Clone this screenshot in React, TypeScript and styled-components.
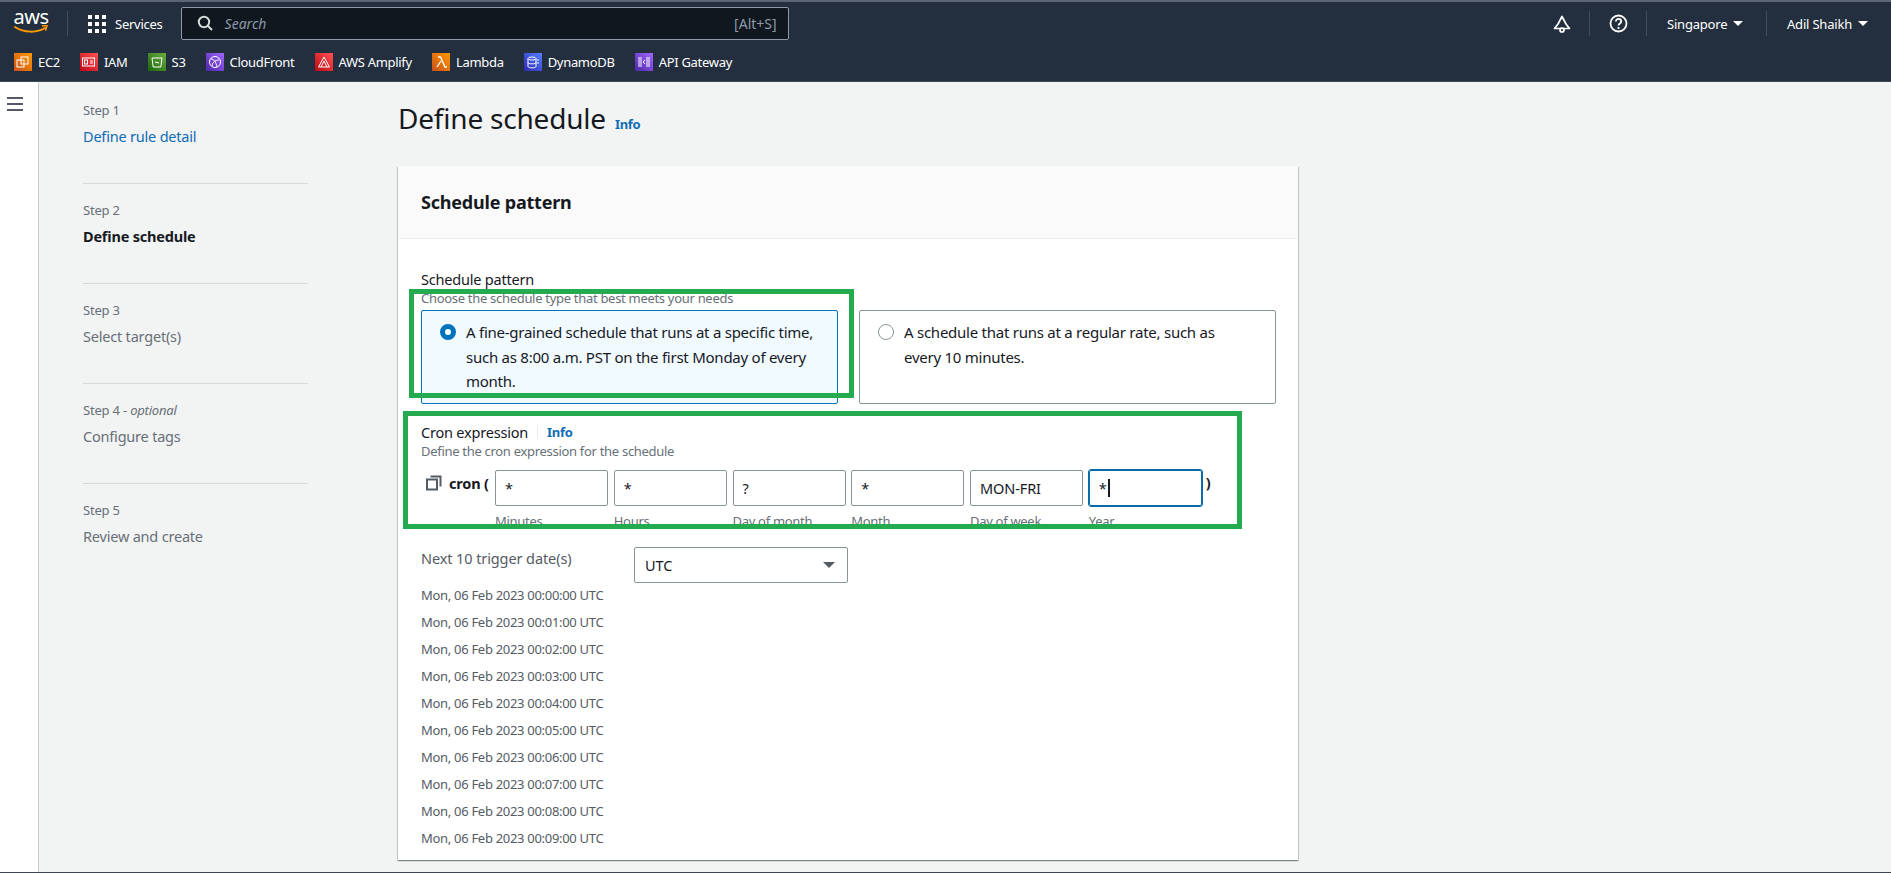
import React from "react";
import styled, { createGlobalStyle } from "styled-components";

const FONT = `"Noto Sans", "Open Sans", Arial, sans-serif`;

const Global = createGlobalStyle`
  html, body { margin: 0; padding: 0; background: #f2f3f3; }
  body { font-family: ${FONT}; color: #16191f; overflow: hidden; }
  * { box-sizing: border-box; }
`;

const Page = styled.div`
  position: relative;
  width: 1891px;
  height: 873px;
  display: flex;
  flex-direction: column;
  border-bottom: 1px solid #3b4552;
`;

const Nav = styled.header`
  height: 82px;
  flex: none;
  background: #232f3e;
  border-top: 2px solid #5c6672;
  border-bottom: 1px solid #3f4a58;
  color: #fff;
  display: flex;
  flex-direction: column;
`;

const TopRow = styled.div`
  height: 43px;
  display: flex;
  align-items: center;
  padding-left: 13px;
`;

const Logo = styled.div`
  width: 36px;
  height: 30px;
  flex: none;
  display: flex;
  flex-direction: column;
  align-items: center;
  font-size: 20px;
  line-height: 18px;
  letter-spacing: -0.5px;
  color: #fff;
  margin-top: -2px;
  svg { margin-top: -1px; }
`;

const NavDivider = styled.div`
  width: 1px;
  height: 25px;
  background: #414d5c;
  flex: none;
`;

const Services = styled.div`
  display: flex;
  align-items: center;
  gap: 9px;
  font-size: 13px;
  margin: 0 18px 0 20px;
  letter-spacing: -0.25px;
`;

const SearchBox = styled.div`
  width: 608px;
  height: 33px;
  flex: none;
  background: #10171f;
  border: 1px solid #8d99a8;
  border-radius: 2px;
  display: flex;
  align-items: center;
  padding: 0 11px 0 15px;
  gap: 12px;
  font-size: 14px;
  color: #8d99a8;
  margin-top: -1px;
`;

const SearchText = styled.span`
  font-style: italic;
  flex: 1;
`;

const RightGroup = styled.div`
  margin-left: auto;
  display: flex;
  align-items: center;
  height: 25px;
  font-size: 13px;
`;

const IconCell = styled.div<{ $w: number }>`
  width: ${(p) => p.$w}px;
  display: flex;
  justify-content: center;
`;

const Menu = styled.div<{ $w: number }>`
  width: ${(p) => p.$w}px;
  padding-left: 20px;
  display: flex;
  align-items: center;
  gap: 6px;
  white-space: nowrap;
  letter-spacing: -0.2px;
`;

const Tri = styled.span<{ $color?: string; $w?: number }>`
  width: 0;
  height: 0;
  flex: none;
  border-left: ${(p) => p.$w ?? 5}px solid transparent;
  border-right: ${(p) => p.$w ?? 5}px solid transparent;
  border-top: ${(p) => p.$w ?? 5}px solid ${(p) => p.$color ?? "#fff"};
`;

const FavRow = styled.div`
  flex: 1;
  display: flex;
  align-items: center;
  padding: 0 0 3px 14px;
  gap: 20px;
  font-size: 13px;
  letter-spacing: -0.3px;
`;

const Fav = styled.div`
  display: flex;
  align-items: center;
  gap: 6px;
`;

const FavIcon = styled.span<{ $from: string; $to: string }>`
  width: 18px;
  height: 18px;
  flex: none;
  display: flex;
  align-items: center;
  justify-content: center;
  background: linear-gradient(45deg, ${(p) => p.$from}, ${(p) => p.$to});
`;

const Body = styled.div`
  flex: 1;
  display: flex;
  min-height: 0;
`;

const Rail = styled.div`
  width: 39px;
  flex: none;
  background: #fff;
  border-right: 1px solid #c8cccc;
  padding: 15px 0 0 7px;
`;

const Bars = styled.div`
  width: 16px;
  height: 14px;
  border-top: 2px solid #545b64;
  border-bottom: 2px solid #545b64;
  display: flex;
  align-items: center;
  &::before { content: ""; display: block; width: 100%; height: 2px; background: #545b64; }
`;

const Steps = styled.nav`
  width: 359px;
  flex: none;
  padding: 17px 90px 0 44px;
`;

const StepItem = styled.div<{ $last?: boolean }>`
  height: 84.5px;
  padding-top: 1px;
  border-bottom: ${(p) => (p.$last ? "none" : "1px solid #d5dbdb")};
  margin-bottom: 15.5px;
`;

const StepNo = styled.div`
  font-size: 13px;
  line-height: 20px;
  color: #687078;
  letter-spacing: -0.2px;
  em { font-style: italic; }
`;

const StepName = styled.div<{ $kind: "link" | "active" | "off" }>`
  font-size: 14.5px;
  line-height: 22px;
  margin-top: 5px;
  letter-spacing: -0.2px;
  color: ${(p) => (p.$kind === "link" ? "#0f6cb5" : p.$kind === "active" ? "#16191f" : "#687078")};
  font-weight: ${(p) => (p.$kind === "active" ? 700 : 400)};
`;

const Main = styled.main`
  width: 900px;
  flex: none;
`;

const TitleRow = styled.div`
  height: 84px;
  padding-top: 16px;
  display: flex;
  align-items: baseline;
  gap: 9px;
`;

const Title = styled.h1`
  margin: 0;
  font-size: 28px;
  line-height: 40px;
  font-weight: 400;
  letter-spacing: -0.2px;
`;

const InfoLink = styled.a`
  font-size: 13px;
  font-weight: 700;
  color: #0f6cb5;
  letter-spacing: -0.3px;
`;

const Card = styled.section`
  background: #fff;
  height: 694px;
  box-shadow: 0 1px 1px 0 rgba(0, 28, 36, 0.3), 1px 1px 1px 0 rgba(0, 28, 36, 0.15), -1px 1px 1px 0 rgba(0, 28, 36, 0.15);
`;

const CardHead = styled.div`
  height: 73px;
  background: #fafafa;
  border-bottom: 1px solid #eaeded;
  padding: 0 23px;
  display: flex;
  align-items: center;
  font-size: 18px;
  font-weight: 700;
  letter-spacing: -0.2px;
`;

const CardBody = styled.div`
  padding: 30px 23px 0;
`;

const FieldLabel = styled.div`
  font-size: 14.5px;
  line-height: 20px;
  letter-spacing: -0.2px;
`;

const Hint = styled.div`
  font-size: 13px;
  line-height: 19px;
  color: #687078;
  letter-spacing: -0.3px;
`;

const Tiles = styled.div`
  display: grid;
  grid-template-columns: 417px 417px;
  gap: 21px;
  margin-top: 2px;
`;

const Tile = styled.div<{ $on?: boolean }>`
  height: 94px;
  border: 1px solid ${(p) => (p.$on ? "#0073bb" : "#879596")};
  background: ${(p) => (p.$on ? "#f1faff" : "#fff")};
  border-radius: 2px;
  padding: 9px 20px 0 18px;
  display: flex;
  gap: 10px;
`;

const Radio = styled.span<{ $on?: boolean }>`
  width: 16px;
  height: 16px;
  flex: none;
  margin-top: 4px;
  border-radius: 50%;
  background: #fff;
  border: ${(p) => (p.$on ? "5px solid #0073bb" : "1px solid #879596")};
`;

const TileText = styled.div`
  font-size: 15px;
  line-height: 24.6px;
  letter-spacing: -0.25px;
`;

const CronHead = styled.div`
  margin-top: 18px;
  display: flex;
  align-items: center;
  height: 20px;
`;

const CronSep = styled.span`
  width: 1px;
  height: 14px;
  background: #eaeded;
  margin: 0 9px 0 9px;
`;

const CronRow = styled.div`
  margin-top: 9px;
  display: flex;
  align-items: flex-start;
`;

const CronLead = styled.div`
  width: 74px;
  flex: none;
  height: 24px;
  padding: 2px 0 0 5px;
  display: flex;
  align-items: center;
  gap: 7px;
  font-size: 14.5px;
  font-weight: 700;
  white-space: nowrap;
  letter-spacing: -0.2px;
`;

const CronFields = styled.div`
  display: flex;
  gap: 5.75px;
`;

const CronField = styled.div`
  width: 113px;
  flex: none;
`;

const FieldBox = styled.div<{ $focus?: boolean }>`
  height: 36px;
  display: flex;
  align-items: center;
  padding-left: ${(p) => (p.$focus ? "9px" : "9px")};
  font-size: 14.5px;
  border-radius: 2px;
  background: #fff;
  border: 1px solid #879596;
  letter-spacing: -0.1px;
  ${(p) =>
    p.$focus
      ? `outline: 1px solid #0b6aa8; outline-offset: 0; border-color: #0b6aa8;`
      : ""}
`;

const Caret = styled.span`
  width: 2px;
  height: 18px;
  background: #16191f;
  margin-left: 1px;
`;

const FieldCaption = styled.div`
  margin-top: 6px;
  font-size: 13px;
  line-height: 18px;
  color: #687078;
  letter-spacing: -0.3px;
`;

const CloseParen = styled.span`
  font-size: 14.5px;
  font-weight: 700;
  margin: 2px 0 0 4px;
`;

const TriggerHead = styled.div`
  margin-top: 17px;
  display: flex;
`;

const TriggerLabel = styled.div`
  width: 213px;
  flex: none;
  padding-top: 1px;
  font-size: 14.5px;
  line-height: 20px;
  color: #545b64;
  letter-spacing: -0.1px;
`;

const Select = styled.div`
  width: 214px;
  height: 36px;
  border: 1px solid #879596;
  border-radius: 2px;
  background: #fff;
  display: flex;
  align-items: center;
  justify-content: space-between;
  padding: 0 12px 0 10px;
  font-size: 14.5px;
`;

const Dates = styled.div`
  margin-top: -1px;
  display: flex;
  flex-direction: column;
`;

const DateRow = styled.div`
  font-size: 13px;
  line-height: 27px;
  color: #545b64;
  letter-spacing: -0.3px;
`;

const Annotation = styled.div<{ $x: number; $y: number; $w: number; $h: number }>`
  position: absolute;
  left: ${(p) => p.$x}px;
  top: ${(p) => p.$y}px;
  width: ${(p) => p.$w}px;
  height: ${(p) => p.$h}px;
  border: 5px solid #25ab4f;
  pointer-events: none;
`;

const glyph = { fill: "none", stroke: "#fff", strokeWidth: 1 };

const favs = [
  { name: "EC2", from: "#c8511b", to: "#ff9900", g: <><rect x="3" y="7" width="7" height="7" {...glyph} /><rect x="7" y="4" width="7" height="7" {...glyph} /></> },
  { name: "IAM", from: "#bd0816", to: "#ff5252", g: <><rect x="2.5" y="5" width="12" height="8" {...glyph} /><rect x="4.5" y="7" width="3" height="4" {...glyph} /><path d="M10 8h3M10 10h3" {...glyph} /></> },
  { name: "S3", from: "#1b660f", to: "#6cae3e", g: <><path d="M4 5h10l-1.2 9H5.2z" {...glyph} /><path d="M7 9l4 1" {...glyph} /></> },
  { name: "CloudFront", from: "#4d27a8", to: "#a166ff", g: <><circle cx="9" cy="9" r="5.5" {...glyph} /><path d="M5 6c3 0 5 3 6 8M6 13c0-3 3-6 7-6" {...glyph} /></> },
  { name: "AWS Amplify", from: "#bd0816", to: "#ff5252", g: <path d="M9 4l5.5 10h-11zM9 8l-3 6M9 8l3 6" {...glyph} /> },
  { name: "Lambda", from: "#c8511b", to: "#ff9900", g: <path d="M6 4h2.5l4.5 10h2M9 8l-4 6" {...glyph} strokeWidth={1.3} /> },
  { name: "DynamoDB", from: "#2e27ad", to: "#527fff", g: <><ellipse cx="8" cy="5.5" rx="4" ry="1.5" {...glyph} /><path d="M4 5.5v8c0 1.8 8 1.8 8 0v-8M4 9.5c0 1.8 8 1.8 8 0M13 7h2M13 10h2" {...glyph} /></> },
  { name: "API Gateway", from: "#4d27a8", to: "#a166ff", g: <><path d="M4 4v10M6 4v10M12 4v10M14 4v10" {...glyph} /><path d="M10 7L8 9l2 2" {...glyph} /></> },
];

const steps: { no: React.ReactNode; name: string; kind: "link" | "active" | "off" }[] = [
  { no: "Step 1", name: "Define rule detail", kind: "link" },
  { no: "Step 2", name: "Define schedule", kind: "active" },
  { no: "Step 3", name: "Select target(s)", kind: "off" },
  { no: <>Step 4 - <em>optional</em></>, name: "Configure tags", kind: "off" },
  { no: "Step 5", name: "Review and create", kind: "off" },
];

const cron = [
  { v: "*", c: "Minutes" },
  { v: "*", c: "Hours" },
  { v: "?", c: "Day of month" },
  { v: "*", c: "Month" },
  { v: "MON-FRI", c: "Day of week" },
  { v: "*", c: "Year", focus: true },
];

export default function App() {
  return (
    <Page>
      <Global />
      <Nav>
        <TopRow>
          <Logo>
            <span>aws</span>
            <svg width="36" height="10" viewBox="0 0 36 10">
              <path d="M2 2c9 6 22 6 30 1" fill="none" stroke="#f90" strokeWidth="2" strokeLinecap="round" />
              <path d="M29 1l5-.5-1.5 5" fill="none" stroke="#f90" strokeWidth="1.6" />
            </svg>
          </Logo>
          <NavDivider style={{ marginLeft: 18 }} />
          <Services>
            <svg width="18" height="18" viewBox="0 0 18 18" fill="#fff">
              {[0, 7, 14].flatMap((y) =>
                [0, 7, 14].map((x) => <rect key={`${x}-${y}`} x={x} y={y} width="4" height="4" />)
              )}
            </svg>
            Services
          </Services>
          <SearchBox>
            <svg width="16" height="16" viewBox="0 0 16 16" fill="none" stroke="#d5dbdb" strokeWidth="2">
              <circle cx="7" cy="7" r="5.2" />
              <path d="M11 11l4 4" />
            </svg>
            <SearchText>Search</SearchText>
            <span>[Alt+S]</span>
          </SearchBox>
          <RightGroup>
            <IconCell $w={54}>
              <svg width="18" height="18" viewBox="0 0 18 18" fill="none" stroke="#fff" strokeWidth="1.7">
                <path d="M9 1.5L13 9l3.5 4.5h-15L5 9z" strokeLinejoin="round" />
                <circle cx="9" cy="15" r="2" />
              </svg>
            </IconCell>
            <NavDivider />
            <IconCell $w={56}>
              <svg width="19" height="19" viewBox="0 0 19 19" fill="none" stroke="#fff" strokeWidth="1.8">
                <circle cx="9.5" cy="9.5" r="8" />
                <path d="M6.8 7.5c0-3.4 5.4-3.4 5.4 0 0 2-2.7 2-2.7 4" />
                <path d="M9.5 13v2" />
              </svg>
            </IconCell>
            <NavDivider />
            <Menu $w={119}>Singapore <Tri /></Menu>
            <NavDivider />
            <Menu $w={124}>Adil Shaikh <Tri /></Menu>
          </RightGroup>
        </TopRow>
        <FavRow>
          {favs.map((f) => (
            <Fav key={f.name}>
              <FavIcon $from={f.from} $to={f.to}>
                <svg width="18" height="18" viewBox="0 0 18 18">{f.g}</svg>
              </FavIcon>
              {f.name}
            </Fav>
          ))}
        </FavRow>
      </Nav>
      <Body>
        <Rail><Bars /></Rail>
        <Steps>
          {steps.map((s, i) => (
            <StepItem key={s.name} $last={i === steps.length - 1}>
              <StepNo>{s.no}</StepNo>
              <StepName $kind={s.kind}>{s.name}</StepName>
            </StepItem>
          ))}
        </Steps>
        <Main>
          <TitleRow>
            <Title>Define schedule</Title>
            <InfoLink>Info</InfoLink>
          </TitleRow>
          <Card>
            <CardHead>Schedule pattern</CardHead>
            <CardBody>
              <FieldLabel>Schedule pattern</FieldLabel>
              <Hint>Choose the schedule type that best meets your needs</Hint>
              <Tiles>
                <Tile $on>
                  <Radio $on />
                  <TileText>A fine-grained schedule that runs at a specific time, such as 8:00 a.m. PST on the first Monday of every month.</TileText>
                </Tile>
                <Tile>
                  <Radio />
                  <TileText>A schedule that runs at a regular rate, such as every 10 minutes.</TileText>
                </Tile>
              </Tiles>
              <CronHead>
                <FieldLabel>Cron expression</FieldLabel>
                <CronSep />
                <InfoLink>Info</InfoLink>
              </CronHead>
              <Hint>Define the cron expression for the schedule</Hint>
              <CronRow>
                <CronLead>
                  <svg width="16" height="16" viewBox="0 0 16 16" fill="none" stroke="#545b64" strokeWidth="2">
                    <rect x="1" y="4.5" width="10" height="10" />
                    <path d="M4.5 1.5h10v10" />
                  </svg>
                  cron (
                </CronLead>
                <CronFields>
                  {cron.map((c) => (
                    <CronField key={c.c}>
                      <FieldBox $focus={c.focus}>
                        {c.v}
                        {c.focus && <Caret />}
                      </FieldBox>
                      <FieldCaption>{c.c}</FieldCaption>
                    </CronField>
                  ))}
                </CronFields>
                <CloseParen>)</CloseParen>
              </CronRow>
              <TriggerHead>
                <TriggerLabel>Next 10 trigger date(s)</TriggerLabel>
                <Select>
                  UTC
                  <Tri $color="#545b64" $w={6} />
                </Select>
              </TriggerHead>
              <Dates>
                {Array.from({ length: 10 }, (_, i) => (
                  <DateRow key={i}>{`Mon, 06 Feb 2023 00:0${i}:00 UTC`}</DateRow>
                ))}
              </Dates>
            </CardBody>
          </Card>
        </Main>
      </Body>
      <Annotation $x={409} $y={289} $w={445} $h={109} />
      <Annotation $x={403} $y={411} $w={839} $h={118} />
    </Page>
  );
}
